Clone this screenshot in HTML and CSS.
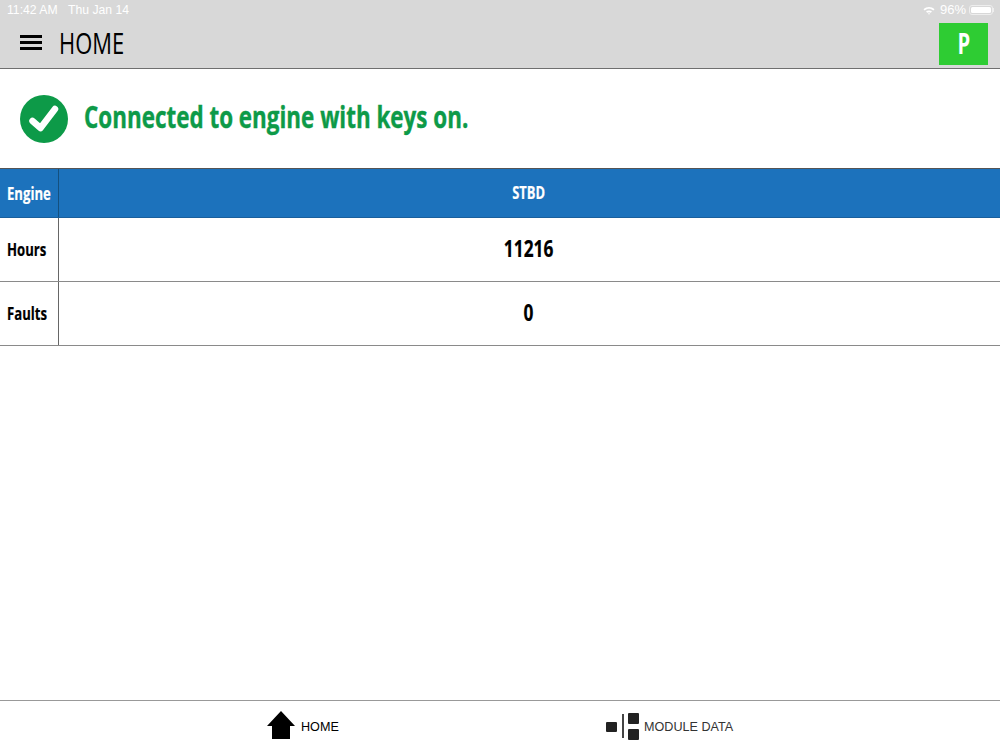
FILE: index.html
```html
<!DOCTYPE html>
<html lang="en">
<head>
<meta charset="utf-8">
<title>Home</title>
<link rel="stylesheet" href="styles.css">
</head>
<body>
<div class="app">
  <header class="top">
    <div class="status">
      <div class="status-left"><span>11:42 AM</span><span>Thu Jan 14</span></div>
      <div class="status-right">
        <svg class="wifi" width="12" height="9" viewBox="0 0 12 9"><path d="M0.5 3.2C3.6 0.4 8.4 0.4 11.5 3.2L10.3 4.5C7.8 2.3 4.2 2.3 1.7 4.5Z" fill="#fff"/><path d="M3 5.6C4.7 4.2 7.3 4.2 9 5.6L7.8 6.8C6.8 6 5.2 6 4.2 6.8Z" fill="#fff"/><path d="M5 7.6C5.6 7.1 6.4 7.1 7 7.6L6 8.7Z" fill="#fff"/></svg>
        <span>96%</span>
        <span class="battery"><span class="battery-fill"></span></span>
        <span class="battery-tip"></span>
      </div>
    </div>
    <div class="bar">
      <div class="menu"><span></span><span></span><span></span></div>
      <h1 class="title"><span class="cond">HOME</span></h1>
      <div class="badge"><span class="cond">P</span></div>
    </div>
  </header>
  <section class="notice">
    <svg class="check" width="48" height="48" viewBox="0 0 48 48"><circle cx="24" cy="24" r="24" fill="#0d9a48"/><path d="M12.500 26L20.500 33L35 14" fill="none" stroke="#fff" stroke-width="6.500" stroke-linecap="round" stroke-linejoin="round"/></svg>
    <p class="notice-text"><span class="cond">Connected to engine with keys on.</span></p>
  </section>
  <div class="table">
    <div class="row row-head">
      <div class="label"><span class="cond">Engine</span></div>
      <div class="value"><span class="cond">STBD</span></div>
    </div>
    <div class="row">
      <div class="label"><span class="cond">Hours</span></div>
      <div class="value value-big"><span class="cond">11216</span></div>
    </div>
    <div class="row">
      <div class="label"><span class="cond">Faults</span></div>
      <div class="value value-big"><span class="cond">0</span></div>
    </div>
  </div>
  <main class="spacer"></main>
  <nav class="tabs">
    <a class="tab tab-home">
      <svg width="30" height="30" viewBox="0 0 30 30"><path d="M15 0L29 15H24V28H6V15H1Z" fill="#000"/></svg>
      <span class="tab-text">HOME</span>
    </a>
    <a class="tab tab-module">
      <svg width="33" height="27" viewBox="0 0 33 27"><rect x="0" y="9" width="11" height="10" rx="1" fill="#222"/><rect x="16" y="1" width="2" height="24" fill="#444"/><rect x="22" y="0" width="11" height="11" rx="1" fill="#222"/><rect x="22" y="16" width="11" height="11" rx="1" fill="#222"/></svg>
      <span class="tab-text">MODULE DATA</span>
    </a>
  </nav>
</div>
</body>
</html>
```
FILE: styles.css
```css
* { box-sizing: border-box; }
html, body { margin: 0; height: 100%; }
body { font-family: "Open Sans", "Liberation Sans", sans-serif; background: #fff; color: #000; overflow: hidden; }
.app { width: 1000px; height: 750px; display: flex; flex-direction: column; }
.cond { display: inline-block; transform: scaleX(0.76); white-space: nowrap; }

.top { height: 69px; background: #d8d8d8; border-bottom: 1px solid #6f6f6f; display: flex; flex-direction: column; }
.status { height: 20px; padding: 0 6px 0 7px; display: flex; justify-content: space-between; align-items: center; color: #fff; font: 12.200px/20px "Liberation Sans", sans-serif; }
.status-left { display: flex; gap: 10.500px; }
.status-right { display: flex; align-items: center; font-size: 13px; }
.wifi { margin-right: 5px; }
.battery { width: 24px; height: 10px; margin-left: 3px; padding: 1px; border: 1px solid #eee; border-radius: 3px; display: flex; }
.battery-fill { flex: 1; background: #fff; border-radius: 1.500px; }
.battery-tip { width: 1px; height: 4px; background: #eee; }

.bar { flex: 1; display: flex; align-items: center; padding: 0 12px 0 20px; }
.menu { width: 22px; display: flex; flex-direction: column; gap: 3px; margin-top: -3px; }
.menu span { height: 3px; background: #000; }
.title { flex: 1; margin: -2px 0 0 17px; font-size: 28.500px; font-weight: 400; line-height: 36px; }
.title .cond { transform-origin: left center; transform: scaleX(0.77); }
.badge { width: 49px; height: 42px; background: #2ecc33; color: #fff; display: flex; align-items: center; justify-content: center; font-size: 28px; font-weight: 700; padding-bottom: 3px; }
.badge .cond { transform: scaleX(0.72); }

.notice { height: 99px; display: flex; align-items: center; padding-left: 20px; gap: 16px; }
.check { flex: none; }
.notice-text { margin: -3px 0 0; color: #0d9a48; font-size: 29.500px; font-weight: 700; line-height: 36px; -webkit-text-stroke: 0.4px #0d9a48; }
.notice-text .cond { transform-origin: left center; }

.table { border-top: 1px solid #555; }
.row { height: 64px; display: flex; border-bottom: 1px solid #8a8a8a; }
.row-head { height: 49px; background: #1c72bc; color: #fff; border-bottom: 1px solid #1a5f9c; }
.label { width: 59px; flex: none; padding: 0 0 1px 7px; border-right: 1px solid #666; display: flex; align-items: center; font-size: 17.300px; font-weight: 700; -webkit-text-stroke: 0.2px currentColor; }
.label .cond { transform-origin: left center; }
.row-head .label { border-right-color: #14507f; padding-bottom: 0; }
.value { flex: 1; display: flex; align-items: center; justify-content: center; padding: 0 1px 1px 0; font-size: 17px; font-weight: 700; -webkit-text-stroke: 0.2px currentColor; }
.value-big { font-size: 22.800px; padding-bottom: 3px; }

.spacer { flex: 1; }
.tabs { height: 50px; border-top: 1px solid #999; display: flex; padding-top: 1px; }
.tab { display: flex; align-items: center; gap: 5px; font: 12.600px "Liberation Sans", sans-serif; color: #333; }
.tab-text { padding-top: 2px; }
.tab-home { margin-left: 266px; width: 340px; color: #000; }
```
